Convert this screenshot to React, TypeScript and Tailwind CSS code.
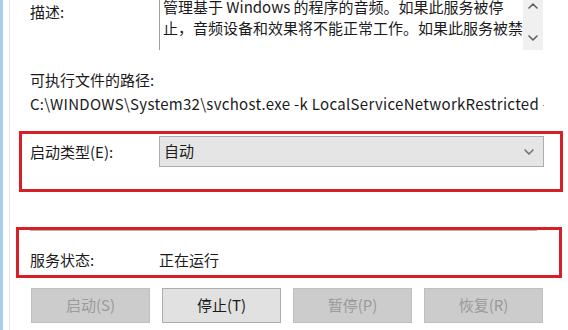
const FONT = "font-['Microsoft_YaHei','Noto_Sans_CJK_SC',sans-serif]";

function Chevron({ dir, className }: { dir: 'up' | 'down'; className?: string }) {
  return (
    <svg className={className} width="10" height="6" viewBox="0 0 10 6" fill="none">
      <path
        d={dir === 'up' ? 'M1 5 L5 1 L9 5' : 'M1 1 L5 5 L9 1'}
        stroke="currentColor"
        strokeWidth="1.6"
        strokeLinecap="round"
        strokeLinejoin="round"
      />
    </svg>
  );
}

function Button({ label, enabled }: { label: string; enabled?: boolean }) {
  return (
    <div
      className={`w-[119px] h-[35px] flex items-center justify-center text-[15px] border ${
        enabled
          ? 'bg-[#e1e1e1] border-[#adadad] text-[#1a1a1a]'
          : 'bg-[#cccccc] border-[#bfbfbf] text-[#9a9a9a]'
      }`}
    >
      {label}
    </div>
  );
}

export default function App() {
  return (
    <div className={`relative w-[568px] h-[330px] bg-white overflow-hidden flex ${FONT} text-[15px] text-[#1b1b1b]`}>
      {/* window frame on the left */}
      <div className="w-[3px] bg-[#a9cdee]" />
      <div className="w-[6px]" />
      <div className="w-px bg-[#e4e4e4]" />

      <div className="flex-1 flex flex-col">
        {/* description */}
        <div className="flex h-[50px]">
          <div className="w-[149px] pl-[20px] pt-[2px] leading-[20px]">描述:</div>
          <div className="w-[384px] flex border-l border-[#a0a0a0]">
            <div className="flex-1 pl-[3px] -mt-[4px] leading-[21px] whitespace-nowrap overflow-hidden">
              <div>管理基于 Windows 的程序的音频。如果此服务被停</div>
              <div>止，音频设备和效果将不能正常工作。如果此服务被禁</div>
            </div>
            <div className="w-[20px] bg-[#f0f0f0] flex flex-col items-center justify-between pt-[3px] pb-[9px] text-[#606060]">
              <Chevron dir="up" />
              <Chevron dir="down" />
            </div>
          </div>
        </div>

        {/* executable path */}
        <div className="mt-[20px] pl-[20px] leading-[20px]">可执行文件的路径:</div>
        <div className="mt-[4px] ml-[20px] w-[514px] leading-[20px] tracking-[0.3px] whitespace-nowrap overflow-hidden">
          C:\WINDOWS\System32\svchost.exe -k LocalServiceNetworkRestricted -p
        </div>

        {/* startup type */}
        <div className="mt-[22px] flex items-center h-[31px]">
          <div className="w-[149px] pl-[20px] leading-[20px]">启动类型(E):</div>
          <div className="w-[385px] h-[31px] bg-[#e5e5e5] border border-[#acacac] flex items-center justify-between pl-[4px] pr-[9px]">
            <span>自动</span>
            <Chevron dir="down" className="text-[#707070]" />
          </div>
        </div>

        {/* separator + service status */}
        <div className="mt-[63px] ml-[20px] w-[507px] h-px bg-[#b4b4b4]" />
        <div className="mt-[19px] flex leading-[20px]">
          <div className="w-[149px] pl-[20px]">服务状态:</div>
          <div>正在运行</div>
        </div>

        {/* buttons */}
        <div className="mt-[18px] ml-[21px] flex gap-[12px]">
          <Button label="启动(S)" />
          <Button label="停止(T)" enabled />
          <Button label="暂停(P)" />
          <Button label="恢复(R)" />
        </div>
      </div>

      {/* red annotation boxes */}
      <div className="absolute left-[19px] top-[131px] w-[544px] h-[61px] border-[3px] border-[#d71f27]" />
      <div className="absolute left-[16px] top-[227px] w-[546px] h-[51px] border-[3px] border-[#d71f27]" />
    </div>
  );
}
